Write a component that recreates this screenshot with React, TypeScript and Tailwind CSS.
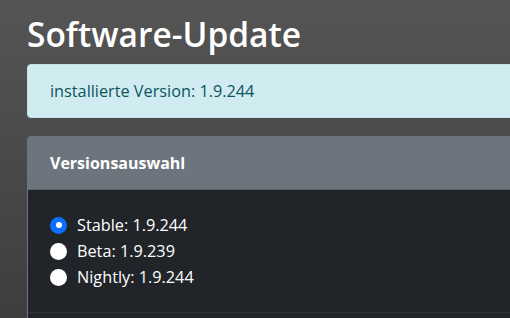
import React, { useState } from 'react';

const CHANNELS = [
  { id: 'stable', label: 'Stable', version: '1.9.244' },
  { id: 'beta', label: 'Beta', version: '1.9.239' },
  { id: 'nightly', label: 'Nightly', version: '1.9.244' },
];

const Radio = ({ checked }: { checked: boolean }) => (
  <span
    className={`flex h-[17px] w-[17px] shrink-0 items-center justify-center rounded-full ${
      checked ? 'bg-[#0d6efd]' : 'bg-white'
    }`}
  >
    {checked && <span className="h-[6px] w-[6px] rounded-full bg-white" />}
  </span>
);

export default function App() {
  const [channel, setChannel] = useState('stable');

  return (
    <div
      className="h-screen w-full overflow-hidden bg-gradient-to-b from-[#555555] to-[#3e3e3e]"
      style={{ fontFamily: '"Open Sans", "Noto Sans", sans-serif' }}
    >
      <div className="w-[640px] pl-[27px] pt-[13px]">
        <h2 className="mb-[9px] text-[33.5px] font-semibold leading-[42px] text-white">Software-Update</h2>

        {/* installed version */}
        <div className="flex h-[54px] items-center rounded-l-[4px] border border-[#bee5eb] bg-[#d1ecf1] pl-[22px] text-[16.25px] text-[#0c5460]">
          installierte Version: 1.9.244
        </div>

        {/* channel selection */}
        <div className="mt-[18px] overflow-hidden rounded-tl-[4px] border-l border-[#6c757d] bg-[#212529]">
          <div className="flex h-[54px] items-center border-b border-[#5b6168] bg-[#6c757d] pl-[22px] text-[16px] font-bold text-white">
            Versionsauswahl
          </div>
          <div className="flex flex-col px-[22px] py-[22px]">
            {CHANNELS.map((c) => (
              <label
                key={c.id}
                className="flex h-[26px] cursor-pointer items-center gap-[10px] text-[16.25px] text-white"
                onClick={() => setChannel(c.id)}
              >
                <Radio checked={channel === c.id} />
                <span>
                  {c.label}: {c.version}
                </span>
              </label>
            ))}
          </div>
          <div className="h-[20px] border-t border-[#2f3338]" />
        </div>
      </div>
    </div>
  );
}
